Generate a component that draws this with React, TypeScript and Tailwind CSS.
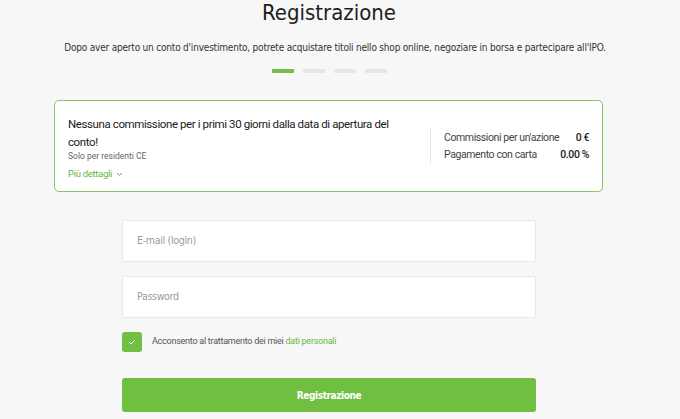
import React from "react";

const cond = { fontFamily: '"DejaVu Sans", sans-serif', fontStretch: "condensed" as const };
const roboto = { fontFamily: 'Roboto, "Liberation Sans", sans-serif' };

export default function App() {
  return (
    <div className="w-[680px] h-[419px] overflow-hidden bg-[#f7f7f7] text-[#222]">
      <div className="w-[658px] flex flex-col items-center" style={cond}>
        <h1 className="h-[28px] -mt-[1px] text-[22px] leading-[28px] font-medium text-[#1e1e1e]">Registrazione</h1>
        <p className="ml-[12px] mt-[14px] h-[14px] text-[10px] leading-[14px] tracking-[-0.2px] text-[#333] whitespace-nowrap">
          Dopo aver aperto un conto d'investimento, potrete acquistare titoli nello shop online, negoziare in borsa e partecipare all'IPO.
        </p>
        <div className="mt-[14px] flex gap-[9px]">
          <div className="w-[22px] h-[4px] rounded-[1px] bg-[#72bf44]" />
          <div className="w-[22px] h-[4px] rounded-[1px] bg-[#e6e6e6]" />
          <div className="w-[22px] h-[4px] rounded-[1px] bg-[#e6e6e6]" />
          <div className="w-[22px] h-[4px] rounded-[1px] bg-[#e6e6e6]" />
        </div>
      </div>

      <div
        className="ml-[54px] mt-[27px] w-[549px] h-[92px] rounded-[5px] border border-[#86c663] bg-white flex items-center pl-[13px] pr-[13px]"
        style={roboto}
      >
        <div className="w-[340px] shrink-0 pt-[4px]">
          <div className="text-[11.5px] leading-[18px] tracking-[-0.4px] text-[#1a1a1a]">
            Nessuna commissione per i primi 30 giorni dalla data di apertura del conto!
          </div>
          <div className="text-[8.5px] leading-[11px] text-[#666]">Solo per residenti CE</div>
          <div className="mt-[5px] text-[9.5px] leading-[14px] tracking-[-0.3px] text-[#6ab546] flex items-center gap-[4px]">
            Più dettagli
            <svg width="7" height="5" viewBox="0 0 7 5" fill="none">
              <path d="M1 1l2.5 2.5L6 1" stroke="#6ab546" strokeWidth="1" />
            </svg>
          </div>
        </div>
        <div className="ml-[22px] w-px h-[35px] shrink-0 bg-[#e4e4e4]" />
        <div className="ml-[13px] flex-1 min-w-0 text-[10.5px] leading-[17px] tracking-[-0.4px] text-[#444] whitespace-nowrap">
          <div className="flex justify-between">
            <span>Commissioni per un'azione</span>
            <span className="font-medium text-[#1a1a1a]">0 €</span>
          </div>
          <div className="flex justify-between">
            <span>Pagamento con carta</span>
            <span className="font-medium text-[#1a1a1a]">0.00 %</span>
          </div>
        </div>
      </div>

      <div className="w-[414px] ml-[122px] mt-[28px] flex flex-col">
        <div
          className="h-[42px] bg-white border border-[#e8e8e8] rounded-[2px] flex items-center pl-[14px] text-[10.5px] tracking-[-0.3px] text-[#9a9a9a]"
          style={cond}
        >
          E-mail (login)
        </div>
        <div
          className="mt-[14px] h-[42px] bg-white border border-[#e8e8e8] rounded-[2px] flex items-center pl-[14px] text-[10.5px] tracking-[-0.3px] text-[#9a9a9a]"
          style={cond}
        >
          Password
        </div>
        <div className="mt-[14px] flex items-center">
          <div className="w-[20px] h-[20px] rounded-[3px] bg-[#72bf44] flex items-center justify-center">
            <svg width="8" height="6" viewBox="0 0 8 6" fill="none">
              <path d="M1 3l2 2 4-4" stroke="white" strokeWidth="1" />
            </svg>
          </div>
          <span className="ml-[10px] text-[9px] tracking-[-0.25px] text-[#555]" style={roboto}>
            Acconsento al trattamento dei miei <span className="text-[#6ab546]">dati personali</span>
          </span>
        </div>
        <button
          className="mt-[26px] h-[34px] rounded-[3px] bg-[#70bf40] text-white text-[10px] tracking-[-0.4px] font-bold"
          style={cond}
        >
          Registrazione
        </button>
      </div>
    </div>
  );
}
